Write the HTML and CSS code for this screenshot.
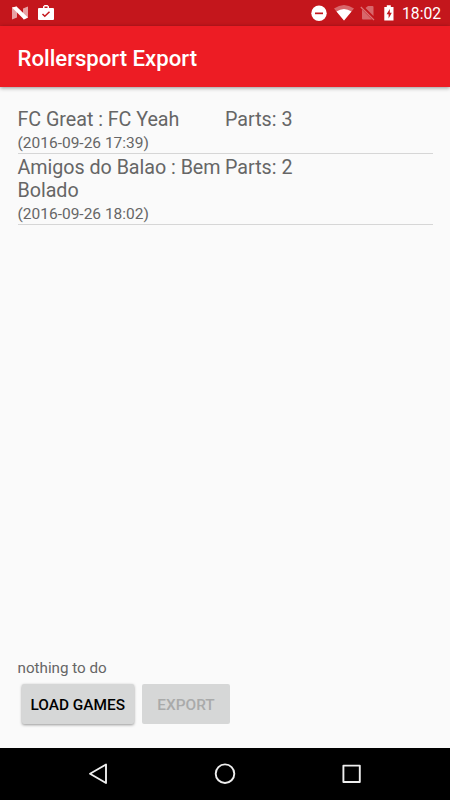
FILE: index.html
```html
<!DOCTYPE html>
<html lang="en">
<head>
<meta charset="utf-8">
<title>Rollersport Export</title>
<link rel="stylesheet" href="styles.css">
</head>
<body>
<div class="status">
  <svg class="notices" width="60" height="26" viewBox="0 0 60 26" fill="#fff">
    <path d="M12 7.500 17 6.500v11L12 19.500zM23 8.500 28 6.500v11L23 19.500z" opacity=".6"/>
    <path d="M12 7.500 16.500 6.500 28 17.500 24 19.500z"/>
    <path fill-rule="evenodd" d="M43 8V6.500L44.500 5h3L49 6.500V8h4q1 0 1 1v10q0 1-1 1H39q-1 0-1-1V9q0-1 1-1zm1.500 0h3V6.500h-3z"/>
    <path d="m42.500 14 2.300 2.300 4.700-4.500" fill="none" stroke="#c4161c" stroke-width="1.500"/>
  </svg>
  <svg class="system" width="92" height="26" viewBox="308 0 92 26" fill="#fff">
    <circle cx="319" cy="13.300" r="7.700"/>
    <path d="M315 12.500h8v1.700h-8z" fill="#c4161c"/>
    <path d="M334 8.500Q344 1.500 354 8.500L344 20.500z" opacity=".35"/>
    <path d="M336.500 11.500Q344 6.500 351.500 11.500L344 20.500z"/>
    <path d="m365.500 8 2.500-2h4.500q1 0 1 1v9zM362 9.500 372 19.500H363q-1 0-1-1z" opacity=".35"/>
    <path d="m360.800 7 13.200 13" fill="none" stroke="#fff" stroke-width="1.200" opacity=".4"/>
    <path fill-rule="evenodd" d="M384.300 7h2.500V5.300h4V7h2.700v13.500h-9.200zM389.800 9l-3.200 5.300h2V18.500l3.200-5.700h-2z"/>
  </svg>
  <span class="clock">18:02</span>
</div>
<header class="appbar"><h1>Rollersport Export</h1></header>
<main>
  <ul class="games">
    <li><div class="game"><div class="name">FC Great : FC Yeah</div><div class="date">(2016-09-26 17:39)</div></div><div class="parts">Parts: 3</div></li>
    <li><div class="game"><div class="name">Amigos do Balao : Bem Bolado</div><div class="date">(2016-09-26 18:02)</div></div><div class="parts">Parts: 2</div></li>
  </ul>
  <p class="message">nothing to do</p>
  <div class="actions">
    <button class="load">LOAD GAMES</button>
    <button class="export" disabled>EXPORT</button>
  </div>
</main>
<nav>
  <svg width="450" height="52" viewBox="0 748 450 52" fill="none" stroke="#eee" stroke-width="1.900" stroke-linejoin="round">
    <path d="M106 764.500v18.500L90 773.700z"/>
    <circle cx="225" cy="773.700" r="9.300"/>
    <rect x="343.400" y="765.600" width="16.400" height="16.400"/>
  </svg>
</nav>
</body>
</html>
```

FILE: styles.css
```css
* { box-sizing: border-box; }
body {
  margin: 0;
  height: 800px;
  display: flex;
  flex-direction: column;
  background: #fafafa;
  color: #666;
  font-family: Roboto, sans-serif;
  overflow: hidden;
}
.status {
  height: 26px;
  display: flex;
  align-items: center;
  justify-content: space-between;
  background: #c4161c;
  color: #fff;
}
.system { margin-left: auto; }
.clock {
  width: 50px;
  padding: 2px 0 0 2px;
  font-size: 15.7px;
  line-height: 24px;
}
.appbar {
  height: 61px;
  padding: 3px 17.5px 0;
  display: flex;
  align-items: center;
  background: #ed1c24;
  box-shadow: 0 1px 4px rgba(0, 0, 0, .42);
}
h1 {
  margin: 0;
  color: #fff;
  font-size: 22.15px;
  font-weight: 500;
}
main {
  flex: 1;
  display: flex;
  flex-direction: column;
  padding: 19px 17.5px 24px;
}
.games {
  margin: 0;
  padding: 0;
  list-style: none;
}
.games li {
  display: grid;
  grid-template-columns: 1fr 1fr;
  padding-top: 2px;
  border-bottom: 1px solid #d6d6d6;
}
.name, .parts {
  font-size: 19.7px;
  line-height: 23px;
}
.name {
  margin-right: -4px;
  letter-spacing: -.03px;
}
.date {
  padding-top: 3px;
  font-size: 15.5px;
  line-height: 19px;
}
.message {
  margin: auto 0 7px;
  font-size: 15.2px;
  line-height: 18px;
}
.actions {
  display: flex;
  gap: 8px;
  padding-left: 4px;
}
button {
  height: 40px;
  padding: 1px 0 0;
  border: 0;
  border-radius: 2px;
  background: #d6d7d7;
  color: #000;
  font: 500 15.4px Roboto, sans-serif;
}
.load {
  width: 112.5px;
  box-shadow: 0 1px 3px rgba(0, 0, 0, .4);
}
.export {
  width: 88px;
  color: #a9aaaa;
}
nav {
  height: 52px;
  background: #000;
}
nav svg { display: block; }
```
